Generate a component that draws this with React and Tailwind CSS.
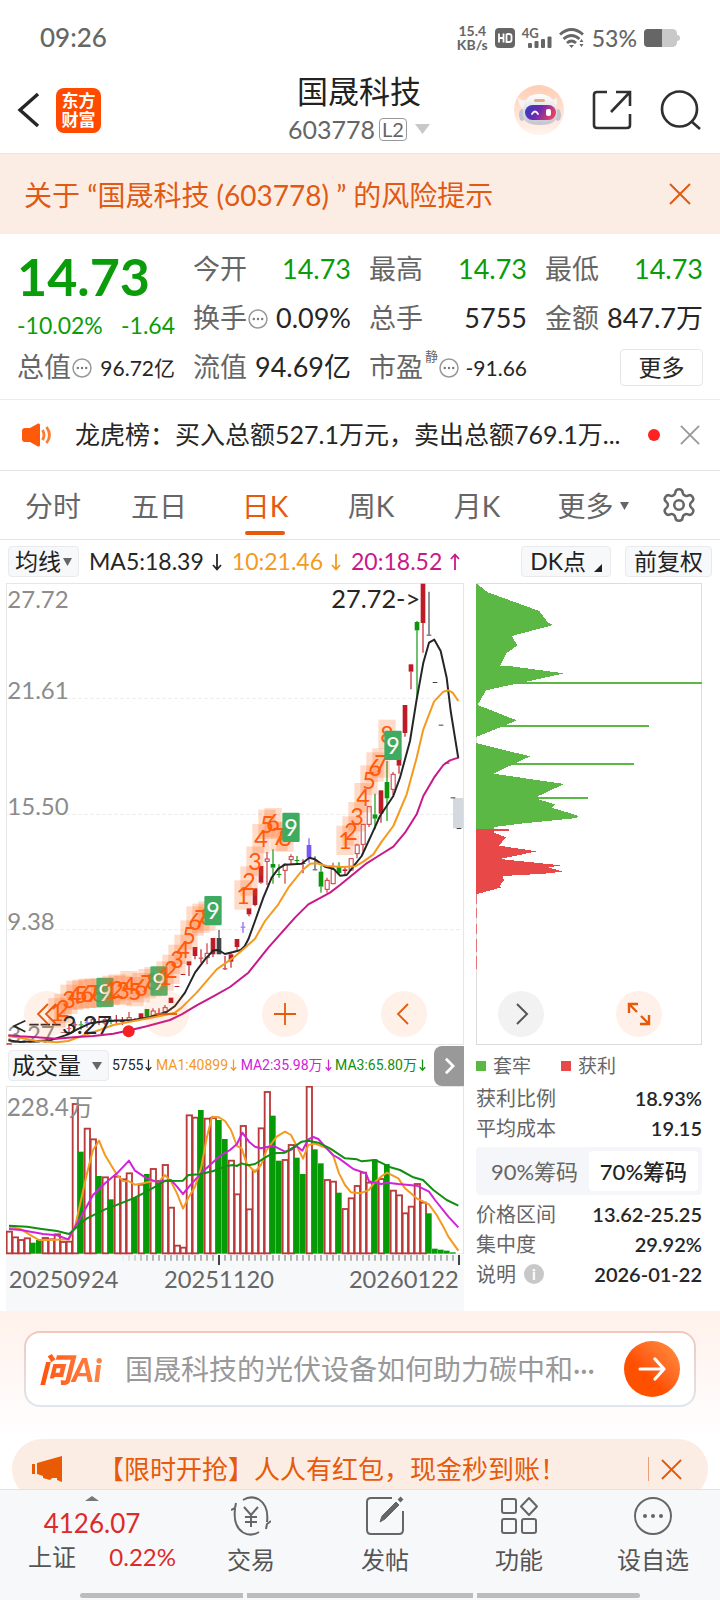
import React from "react";
import { Settings } from "lucide-react";

/* ---------- chart data (units: thirds of a pixel) ---------- */

// [top of bar, rising?] for each trading day
const VOLUME = [
  [575, 1], [592, 1], [600, 1], [595, 1], [608, 0], [600, 0], [594, 1], [598, 1], [583, 1], [606, 1],
  [605, 1], [192, 1], [335, 0], [266, 1], [298, 1], [408, 0], [412, 1], [478, 0], [410, 1], [418, 1],
  [400, 1], [472, 0], [434, 1], [402, 0], [387, 1], [420, 0], [375, 1], [503, 1], [617, 1], [623, 1],
  [226, 1], [233, 1], [210, 0], [236, 1], [234, 1], [240, 0], [297, 0], [362, 1], [463, 1], [258, 1],
  [508, 1], [392, 1], [265, 1], [156, 1], [227, 0], [362, 0], [360, 1], [315, 1], [353, 0], [402, 0],
  [140, 1], [328, 0], [370, 0], [420, 1], [425, 1], [458, 0], [507, 1], [475, 1], [438, 1], [398, 1],
  [428, 1], [358, 0], [417, 1], [372, 0], [452, 1], [466, 1], [520, 1], [500, 1], [432, 1], [488, 1],
  [520, 0], [626, 0], [629, 0], [632, 0], [637, 0],
];

// [x, body top, body bottom, high, low, kind]
// f: filled red, h: hollow red, g: green, p: purple, k: dark
const CANDLES = [
  [27, 1418, 1422, 1418, 1422, "h"], [189, 1384, 1386, 1384, 1386, "f"], [207, 1372, 1374, 1362, 1384, "f"],
  [225, 1360, 1363, 1352, 1372, "f"], [243, 1360, 1363, 1350, 1376, "g"], [261, 1354, 1357, 1338, 1370, "p"],
  [279, 1346, 1358, 1340, 1366, "h"], [297, 1350, 1353, 1340, 1362, "f"], [315, 1346, 1356, 1340, 1362, "h"],
  [333, 1350, 1353, 1342, 1360, "g"], [349, 1346, 1349, 1332, 1358, "f"], [367, 1350, 1353, 1338, 1362, "f"],
  [387, 1340, 1348, 1323, 1350, "h"], [405, 1346, 1348, 1342, 1350, "f"], [423, 1327, 1343, 1327, 1343, "f"],
  [441, 1314, 1337, 1314, 1340, "g"], [459, 1320, 1333, 1312, 1336, "h"], [477, 1328, 1331, 1312, 1333, "f"],
  [495, 1310, 1322, 1302, 1328, "h"], [513, 1280, 1296, 1280, 1296, "f"], [531, 1245, 1248, 1245, 1248, "f"],
  [549, 1209, 1212, 1209, 1212, "f"], [567, 1171, 1183, 1171, 1215, "f"], [585, 1128, 1155, 1128, 1165, "f"],
  [603, 1160, 1163, 1135, 1175, "f"], [621, 1147, 1160, 1117, 1180, "h"], [639, 1101, 1150, 1101, 1158, "f"],
  [657, 1101, 1150, 1077, 1150, "k"], [675, 1192, 1195, 1155, 1197, "f"], [693, 1150, 1172, 1145, 1190, "f"],
  [711, 1104, 1128, 1104, 1136, "f"], [729, 1067, 1070, 1053, 1085, "p"], [747, 1012, 1030, 1012, 1036, "f"],
  [765, 952, 1002, 952, 1006, "f"], [783, 885, 935, 885, 938, "f"], [801, 864, 871, 843, 942, "h"],
  [819, 879, 890, 835, 938, "g"], [837, 909, 912, 880, 920, "g"], [855, 880, 898, 876, 938, "h"],
  [873, 857, 866, 850, 880, "h"], [891, 867, 870, 855, 878, "g"], [909, 876, 879, 865, 907, "f"],
  [927, 822, 860, 802, 875, "p"], [945, 895, 898, 856, 898, "k"], [963, 902, 947, 885, 965, "g"],
  [981, 928, 955, 920, 965, "h"], [999, 895, 938, 875, 940, "h"], [1017, 885, 906, 874, 910, "g"],
  [1035, 895, 900, 888, 912, "f"], [1053, 863, 897, 863, 899, "h"], [1071, 822, 848, 818, 862, "h"],
  [1089, 760, 820, 760, 842, "h"], [1107, 707, 760, 707, 768, "h"], [1125, 730, 743, 668, 775, "g"],
  [1143, 658, 728, 658, 755, "f"], [1161, 633, 682, 570, 750, "g"], [1179, 610, 655, 603, 672, "h"],
  [1197, 560, 584, 560, 608, "f"], [1215, 402, 486, 402, 497, "f"], [1233, 280, 302, 280, 355, "f"],
  [1251, 153, 178, 150, 384, "g"], [1269, 38, 156, 38, 245, "f"], [1287, 191, 194, 62, 194, "k"],
  [1305, 333, 336, 333, 336, "k"], [1323, 461, 464, 461, 464, "k"], [1341, 575, 578, 575, 578, "k"],
  [1359, 679, 682, 679, 682, "k"], [1377, 771, 774, 771, 774, "k"],
];

// nine-count sequences: starting x and the centre height of each digit
const COUNTS = [
  [171, [1325, 1312, 1285, 1273, 1270, 1267, 1267, 1266, 1264]],
  [333, [1258, 1254, 1258, 1244, 1262, 1250, 1238, 1232, 1230]],
  [495, [1215, 1195, 1165, 1135, 1092, 1050, 1042, 1035, 1019]],
  [729, [972, 930, 870, 803, 760, 755, 796, 798, 769]],
  [1035, [808, 780, 737, 680, 627, 588, 576, 490, 523]],
];

const KLINE_MA = [
  ["#262626", "25,1408 60,1413 150,1408 205,1390 230,1376 270,1357 320,1350 400,1347 450,1338 500,1323 525,1305 555,1265 585,1205 615,1165 640,1138 655,1137 675,1149 700,1143 722,1137 734,1126 745,1105 765,1050 790,980 815,920 835,893 855,881 905,878 928,860 945,865 975,887 1000,893 1020,914 1040,912 1065,880 1085,855 1115,790 1140,735 1180,675 1200,620 1230,510 1250,385 1270,275 1287,215 1303,206 1322,240 1340,320 1352,420 1375,562"],
  ["#f39a1f", "25,1395 60,1400 110,1410 170,1414 205,1410 250,1393 290,1380 340,1362 390,1352 430,1345 480,1335 525,1325 545,1310 590,1265 650,1195 700,1160 735,1130 765,1103 795,1050 835,1000 865,950 905,900 930,878 950,877 980,885 1030,888 1065,886 1090,872 1120,850 1145,812 1180,765 1220,670 1250,560 1270,475 1302,392 1330,362 1345,358 1358,365 1375,390"],
  ["#c9188a", "25,1393 60,1396 110,1399 170,1403 230,1398 280,1395 340,1388 390,1378 440,1366 510,1347 545,1330 590,1303 640,1276 690,1248 745,1205 805,1130 885,1040 925,1000 990,965 1020,942 1100,877 1135,855 1180,827 1215,785 1250,730 1270,675 1302,620 1330,582 1350,568 1375,560"],
];

const VOLUME_MA = [
  ["#f39a1f", "27,560 63,568 99,590 117,600 150,600 207,598 225,560 243,480 261,400 279,330 297,302 315,345 333,375 351,405 369,423 387,424 405,434 430,430 459,423 477,425 495,405 513,425 531,460 549,506 567,470 585,440 603,385 621,290 636,230 657,232 675,243 693,270 711,318 725,325 740,370 765,396 783,375 800,330 830,290 855,275 873,285 891,320 909,356 925,315 945,311 981,325 999,345 1017,400 1035,435 1053,457 1080,460 1107,450 1125,425 1143,410 1161,398 1195,415 1215,445 1250,475 1287,493 1310,525 1330,560 1345,590 1375,632"],
  ["#d023d8", "27,567 63,570 100,577 130,582 171,586 205,598 225,560 243,530 279,465 315,430 351,400 370,380 387,362 405,392 440,415 470,425 513,420 531,440 549,462 567,440 603,400 657,350 690,330 711,312 727,278 747,305 765,320 783,325 819,317 855,335 873,330 890,318 907,332 925,298 940,291 955,297 975,320 999,345 1017,355 1060,387 1098,400 1107,424 1143,432 1161,428 1195,432 1251,437 1287,455 1305,480 1345,530 1375,562"],
  ["#108f10", "27,557 81,560 120,566 171,573 207,582 230,562 261,535 315,508 345,497 400,475 440,455 495,423 549,422 565,405 600,403 640,393 680,378 700,375 710,378 725,370 745,376 765,372 800,350 819,340 855,338 880,322 905,305 925,302 955,308 990,325 1035,355 1071,358 1085,364 1125,360 1143,368 1171,382 1200,390 1240,412 1269,420 1300,450 1340,480 1375,497"],
];

const COLORS = { f: "#bd1b26", h: "#c8373d", g: "#0b960b", p: "#7b57ee", k: "#444444" };

/* ---------- small drawings ---------- */

function Cross({ className }) {
  return (
    <svg viewBox="0 0 22 22" className={className} fill="none" stroke="currentColor" strokeWidth="2">
      <path d="M1 1 21 21M21 1 1 21" />
    </svg>
  );
}

function Dots() {
  return (
    <svg viewBox="0 0 20 20" className="ml-px h-5 w-5 shrink-0" fill="none" stroke="#999" strokeWidth="1.5">
      <circle cx="10" cy="10" r="9" />
      <g fill="#777" stroke="none">
        <circle cx="5.8" cy="10" r="1.2" />
        <circle cx="10" cy="10" r="1.2" />
        <circle cx="14.2" cy="10" r="1.2" />
      </g>
    </svg>
  );
}

function Caret({ className }) {
  return (
    <svg viewBox="0 0 10 10" preserveAspectRatio="none" className={className} fill="currentColor">
      <path d="M0 0H10L5 10Z" />
    </svg>
  );
}

function Robot() {
  return (
    <svg viewBox="0 0 50 50" className="h-[50px] w-[50px]">
      <defs>
        <linearGradient id="halo" x1="0" y1="0" x2="0" y2="1">
          <stop offset="0" stopColor="#ffcdb4" />
          <stop offset="1" stopColor="#fff4ee" />
        </linearGradient>
        <linearGradient id="visor" x1="0" y1="0" x2="1" y2="0.3">
          <stop offset="0" stopColor="#2b3fc0" />
          <stop offset="0.5" stopColor="#6a2bb0" />
          <stop offset="1" stopColor="#e0406a" />
        </linearGradient>
        <linearGradient id="shell" x1="0" y1="0" x2="0" y2="1">
          <stop offset="0" stopColor="#ffffff" />
          <stop offset="1" stopColor="#c4c4ce" />
        </linearGradient>
      </defs>
      <circle cx="25" cy="25" r="25" fill="url(#halo)" />
      <path d="M4 12Q4 21 10 24L17 14Q8 18 4 12Z" fill="#f6f3f4" />
      <path d="M43 12Q44 20 40 23L34 13Q41 17 43 12Z" fill="#f6f3f4" />
      <ellipse cx="8" cy="30" rx="3" ry="6" fill="#c4c6cf" />
      <ellipse cx="44" cy="30" rx="3" ry="6" fill="#c4c6cf" />
      <path d="M9 27Q9 9 25 9T43 27Q45 40 26 40T9 27Z" fill="url(#shell)" />
      <rect x="20" y="14" width="11" height="3" rx="1.5" fill="#e0b07a" />
      <rect x="11" y="20" width="31" height="15" rx="7.5" fill="url(#visor)" />
      <path d="M18 29Q21 24 24 29" fill="none" stroke="#fff" strokeWidth="1.8" strokeLinecap="round" />
      <rect x="32" y="24" width="5" height="7" rx="2" fill="#fff" />
    </svg>
  );
}

function StatusBar() {
  return (
    <div className="flex h-[75px] items-center justify-between pr-10 pl-10 text-[#666]">
      <span className="text-[26px] font-medium">09:26</span>
      <div className="flex items-center gap-[7px]">
        <span className="text-center text-[14px] leading-[14px] font-bold">15.4<br />KB/s</span>
        <svg viewBox="0 0 20 20" className="h-5 w-5">
          <rect width="20" height="20" rx="4" fill="#666" />
          <path d="M4 5.500V14.500M8.500 5.500V14.500M4 10H8.500M11.500 6V14H14Q16.500 14 16.500 12V8Q16.500 6 14 6H11.500" fill="none" stroke="#fff" strokeWidth="1.8" />
        </svg>
        <span className="relative block h-5 w-[30px]">
          <span className="absolute top-0 left-0 text-[13px] leading-[11px] font-bold">4G</span>
          <svg viewBox="0 0 24 12" className="absolute right-0 bottom-0 h-3 w-6" fill="#666">
            <rect x="0" y="7" width="4" height="5" rx="1" />
            <rect x="6.500" y="5" width="4" height="7" rx="1" />
            <rect x="13" y="3" width="4" height="9" rx="1" />
            <rect x="19.500" y="0.500" width="4" height="11.500" rx="1" />
          </svg>
        </span>
        <svg viewBox="0 0 26 20" className="h-5 w-[26px]" fill="none" stroke="#666" strokeWidth="2.800">
          <path d="M1 6.500Q12.500 -3.500 24 6.500" />
          <path d="M4.500 11Q12.500 4 20.500 11" />
          <path d="M8 15Q12.500 11 17 15" />
          <path d="M10 17H15L12.500 20Z" fill="#666" stroke="none" />
          <path d="M20.500 14 22.500 11 24.500 14ZM20.500 16 22.500 19 24.500 16Z" fill="#666" stroke="none" />
        </svg>
        <span className="text-[23px] leading-6 font-medium">53%</span>
        <svg viewBox="0 0 36 18" className="h-[18px] w-9">
          <path d="M4 0H28Q33 0 33 5V6Q36 6 36 9T33 12V13Q33 18 28 18H4Q0 18 0 14V4Q0 0 4 0Z" fill="#c9c9c9" />
          <path d="M4 0H18V18H4Q0 18 0 14V4Q0 0 4 0Z" fill="#666" />
        </svg>
      </div>
    </div>
  );
}

function Header() {
  return (
    <header className="grid h-[79px] grid-cols-[1fr_auto_1fr] items-center border-b border-[#e6e6e6] pr-[18px] pb-3 pl-4">
      <div className="flex items-center gap-4">
        <button aria-label="返回">
          <svg viewBox="0 0 24 36" className="h-9 w-6" fill="none" stroke="#262626" strokeWidth="3.400">
            <path d="M22 2 4 18 22 34" />
          </svg>
        </button>
        <a href="#home" className="flex h-[45px] w-[45px] items-center justify-center rounded-lg bg-[#ff4a00] text-center text-[17px] leading-[19px] font-bold text-white">
          东方<br />财富
        </a>
      </div>
      <div className="text-center">
        <h1 className="text-[31px] leading-8 text-[#222]">国晟科技</h1>
        <button className="flex items-center gap-1 pt-[6px] text-[25px] leading-8 text-[#666]">
          603778
          <span className="flex h-[23px] items-center rounded border border-[#999] px-[2px] text-[20px] leading-5">L2</span>
          <Caret className="ml-1 h-[10px] w-[15px] text-[#c8c8c8]" />
        </button>
      </div>
      <div className="flex items-center justify-end gap-7">
        <button aria-label="助手"><Robot /></button>
        <button aria-label="分享">
          <svg viewBox="0 0 40 40" className="h-10 w-10" fill="none" stroke="#303030" strokeWidth="2.600">
            <path d="M15 2H5Q2 2 2 5V35Q2 38 5 38H35Q38 38 38 35V24" />
            <path d="M24 2H38V16M38 2 19 22" />
          </svg>
        </button>
        <button aria-label="搜索">
          <svg viewBox="0 0 42 42" className="h-[42px] w-[42px]" fill="none" stroke="#303030" strokeWidth="2.700">
            <circle cx="19.500" cy="20" r="17.500" />
            <path d="M31 32 40 40" />
          </svg>
        </button>
      </div>
    </header>
  );
}

function Stat({ label, value, tone = "text-[#262626]", info, sup, small }) {
  return (
    <div className="flex h-[49px] items-center justify-between whitespace-nowrap">
      <span className="flex items-center text-[27px] text-[#666]">
        {label}
        {sup && <sup className="-top-3 pl-[2px] text-[13px] leading-4">{sup}</sup>}
        {info && <Dots />}
      </span>
      <span className={`${tone} ${small ? "text-[21px]" : "text-[27px]"}`}>{value}</span>
    </div>
  );
}

function Quote() {
  const green = "text-[#0a9c0a]";
  return (
    <section className="border-b border-[#ececec] px-[17px] pt-[11px] pb-[7px]">
      <div className="grid grid-cols-4 gap-x-[18px]">
        <div className="row-span-2">
          <div className={`text-[52px] leading-[62px] font-bold ${green}`}>14.73</div>
          <div className={`flex justify-between text-[23px] leading-9 ${green}`}>
            <span>-10.02%</span>
            <span>-1.64</span>
          </div>
        </div>
        <Stat label="今开" value="14.73" tone={green} />
        <Stat label="最高" value="14.73" tone={green} />
        <Stat label="最低" value="14.73" tone={green} />
        <Stat label="换手" value="0.09%" info />
        <Stat label="总手" value="5755" />
        <Stat label="金额" value="847.7万" />
        <Stat label="总值" value="96.72亿" info small />
        <Stat label="流值" value="94.69亿" />
        <Stat label="市盈" value="-91.66" sup="静" info small />
        <div className="flex items-center justify-end">
          <button className="h-[37px] w-[83px] rounded border border-[#e6e6e6] text-[23px] text-[#262626]">更多</button>
        </div>
      </div>
    </section>
  );
}

function News() {
  return (
    <section className="flex h-[71px] items-center border-b border-[#e4e4e4] pr-5 pl-[22px]">
      <svg viewBox="0 0 30 24" className="h-6 w-[30px] shrink-0">
        <path d="M3 5H8L16 0.500Q18 0 18 2V22Q18 24 16 23.500L8 19H3Q0 19 0 16V8Q0 5 3 5Z" fill="#ff5a0a" />
        <path d="M20.500 7Q23.500 12 20.500 17M24.500 4Q30.500 12 24.500 20" fill="none" stroke="#ff7a30" strokeWidth="2.800" />
      </svg>
      <a href="#news" className="min-w-0 flex-1 truncate pl-[23px] text-[25px] text-[#262626]">
        龙虎榜：买入总额527.1万元，卖出总额769.1万...
      </a>
      <span className="mr-5 h-3 w-3 shrink-0 rounded-full bg-[#f22]" />
      <button aria-label="关闭消息"><Cross className="h-5 w-5 text-[#999]" /></button>
    </section>
  );
}

function Tabs() {
  return (
    <nav className="grid h-[69px] grid-cols-[106fr_106fr_106fr_106fr_106fr_126fr_64fr] border-b border-[#e4e4e4] text-[28px] text-[#666]">
      {["分时", "五日", "日K", "周K", "月K"].map((t) => (
        <button key={t} className={t === "日K" ? "relative pt-[2px] text-[#e65a0c]" : "relative pt-[2px]"}>
          {t}
          {t === "日K" && <span className="absolute bottom-1 left-1/2 h-1 w-10 -translate-x-1/2 rounded-full bg-[#e65a0c]" />}
        </button>
      ))}
      <button className="flex items-center justify-center gap-[6px] pt-[2px]">
        更多<Caret className="h-2 w-[9px]" />
      </button>
      <button aria-label="设置" className="flex items-center justify-center pr-[18px]">
        <Settings className="h-[38px] w-[38px]" strokeWidth={1.6} />
      </button>
    </nav>
  );
}

const chip = "flex h-[31px] items-center rounded border border-[#e8eaee] bg-[#f7f8fa] text-[#222]";

function Averages() {
  return (
    <div className="flex h-[43px] items-center justify-between pr-2 pl-2 text-[23px] whitespace-nowrap">
      <div className="flex items-center gap-[10px]">
        <button className={`${chip} px-[6px]`}>
          均线<Caret className="ml-[2px] h-2 w-[9px] text-[#666]" />
        </button>
        <span className="text-[#262626]">MA5:18.39<Arrow /></span>
        <span className="text-[#f39a1f]">10:21.46<Arrow /></span>
        <span className="text-[#c9188a]">20:18.52<Arrow up /></span>
      </div>
      <div className="flex items-center gap-[14px]">
        <button className={`${chip} gap-2 px-2`}>
          DK点
          <svg viewBox="0 0 8 8" className="mt-3 h-2 w-2"><path d="M8 0V8H0Z" fill="#222" /></svg>
        </button>
        <button className={`${chip} px-2`}>前复权</button>
      </div>
    </div>
  );
}

function Arrow({ up, slim }) {
  return (
    <svg viewBox="0 0 10 18" className={slim ? "ml-[2px] inline h-4 w-[7px] align-[-3px]" : "ml-2 inline h-[18px] w-[10px] align-[-1px]"} fill="none" stroke="currentColor" strokeWidth="1.8">
      <path d={up ? "M5 17V2M1 6 5 1.500 9 6" : "M5 1V16M1 12 5 16.500 9 12"} />
    </svg>
  );
}

function Candle({ c }) {
  const [x, top, bottom, high, low, kind] = c;
  const color = COLORS[kind];
  const hollow = kind === "h";
  return (
    <g stroke={color} strokeWidth="3.500">
      {high < top && <path d={`M${x} ${high}V${top}`} />}
      {low > bottom && <path d={`M${x} ${bottom}V${low}`} />}
      {hollow ? (
        <rect x={x - 5.5} y={top} width="12" height={bottom - top} fill="#fff" strokeWidth="3" />
      ) : (
        <rect x={x - 7} y={top} width="14" height={bottom - top} fill={color} stroke="none" />
      )}
    </g>
  );
}

function KLine() {
  const round = "absolute flex h-[46px] w-[46px] -translate-x-1/2 items-center justify-center rounded-full bg-[#ff6a1a]/10 text-[#e65a0c]";
  const icon = { viewBox: "0 0 24 24", className: "h-6 w-6", fill: "none", stroke: "currentColor", strokeWidth: "1.8" };
  return (
    <div className="relative">
      <svg viewBox="18 36 1374 1386" className="block h-auto w-full" role="img" aria-label="日K线">
        <g fill="none" stroke="#ececec" strokeWidth="3">
          <rect x="19.500" y="37.500" width="1371" height="1383" stroke="#e6e6e6" />
          <path d="M18 382H1392M18 730H1392M18 1076H1392" strokeDasharray="12 6" />
        </g>
        <g fontSize="72" fill="#8c8c8c">
          <text x="22" y="112">27.72</text>
          <text x="22" y="384">21.61</text>
          <text x="22" y="732">15.50</text>
          <text x="22" y="1078">9.38</text>
          <text x="22" y="1416">3.27</text>
        </g>
        <rect x="1359" y="681" width="32" height="91" fill="#d4d8df" />
        {CANDLES.map((c) => <Candle key={c[0]} c={c} />)}
        {KLINE_MA.map(([color, points]) => (
          <polyline key={color} points={points} fill="none" stroke={color} strokeWidth="6" strokeLinejoin="round" />
        ))}
        {COUNTS.map(([x0, ys]) => (
          <g key={x0} fontSize="70" textAnchor="middle">
            {ys.slice(0, 8).map((y, i) => (
              <g key={i} fill="#ff5a0a">
                <rect x={x0 + 18 * i - 26} y={y - 44} width="52" height="88" fillOpacity="0.22" />
                <text x={x0 + 18 * i} y={y + 26}>{i + 1}</text>
              </g>
            ))}
            <rect x={x0 + 118} y={ys[8] - 44} width="52" height="88" rx="4" fill="#3fab60" fillOpacity={x0 < 400 ? 0.9 : 1} />
            <text x={x0 + 144} y={ys[8] + 26} fill="#fff">9</text>
          </g>
        ))}
        <g fontSize="76" fill="#262626">
          <text x="994" y="110">27.72-&gt;</text>
          <text x="186" y="1390">3.27</text>
          <path d="M76 1349 42 1365 76 1382M88 1361H116M122 1361H150M156 1361H182" fill="none" stroke="#262626" strokeWidth="5" />
        </g>
        <circle cx="386" cy="1381" r="18" fill="#f22222" />
      </svg>
      <button aria-label="最早" className={`${round} bottom-2 left-[9%]`}>
        <svg {...icon}><path d="M13 2 3 12 13 22M21 2 11 12 21 22" /></svg>
      </button>
      <button aria-label="缩小" className={`${round} bottom-2 left-[35%]`}>
        <svg {...icon}><path d="M1 12H23" /></svg>
      </button>
      <button aria-label="放大" className={`${round} bottom-2 left-[61%]`}>
        <svg {...icon}><path d="M1 12H23M12 1V23" /></svg>
      </button>
      <button aria-label="向前" className={`${round} bottom-2 left-[87%]`}>
        <svg {...icon}><path d="M16 2 6 12 16 22" /></svg>
      </button>
    </div>
  );
}

function VolumeHeader() {
  return (
    <div className="flex h-[41px] items-center pl-[2px] whitespace-nowrap">
      <button className={`${chip} w-[101px] shrink-0 justify-between pr-[6px] pl-[3px] text-[23px]`}>
        成交量<Caret className="h-2 w-[10px] text-[#666]" />
      </button>
      <div className="flex min-w-0 flex-1 justify-between px-[3px] font-['Roboto','Noto_Sans_CJK_SC',sans-serif] text-[14px]">
        <span className="text-[#262626]">5755<Arrow slim /></span>
        <span className="text-[#f39a1f]">MA1:40899<Arrow slim /></span>
        <span className="text-[#d023d8]">MA2:35.98万<Arrow slim /></span>
        <span className="text-[#108f10]">MA3:65.80万<Arrow slim /></span>
      </div>
      <button aria-label="更多指标" className="ml-[5px] flex h-10 w-[30px] shrink-0 items-center justify-center rounded-l-lg bg-[#999]">
        <svg viewBox="0 0 12 20" className="h-[18px] w-[11px]" fill="none" stroke="#fff" strokeWidth="3"><path d="M2 2 10 10 2 18" /></svg>
      </button>
    </div>
  );
}

function VolumeChart() {
  const ticks = Array.from({ length: 56 }, (_, i) => 369 + 18 * i);
  return (
    <svg viewBox="18 138 1374 675" className="block h-auto w-full" role="img" aria-label="成交量">
      <rect x="19.500" y="139.500" width="1371" height="502" fill="#fff" stroke="#e4e4e4" strokeWidth="3" />
      <rect x="18" y="642" width="1374" height="171" fill="#f7f8fa" />
      {VOLUME.map(([top, up], i) => {
        const x = 27 + 18 * i;
        return up ? (
          <rect key={i} x={x - 7} y={top} width="16" height={640 - top} fill="#fff" stroke="#b93a3a" strokeWidth="5.500" />
        ) : (
          <rect key={i} x={x - 9} y={top} width="17" height={641 - top} fill="#079a07" />
        );
      })}
      {VOLUME_MA.map(([color, points]) => (
        <polyline key={color} points={points} fill="none" stroke={color} strokeWidth="6" strokeLinejoin="round" />
      ))}
      <text x="20" y="227" fontSize="73" fill="#8c8c8c">228.4万</text>
      {ticks.map((x, i) => (
        <path key={x} d={`M${x} 645V662`} stroke="#a6a6a6" strokeWidth="5" opacity={Math.min(1, 0.15 + i * 0.2)} />
      ))}
      <path d="M657 645V675M1377 645V675" stroke="#444" strokeWidth="6" />
      <g fontSize="71" fill="#666">
        <text x="26" y="745">20250924</text>
        <text x="657" y="745" textAnchor="middle">20251120</text>
        <text x="1376" y="745" textAnchor="end">20260122</text>
      </g>
    </svg>
  );
}

function ChipChart() {
  const round = "absolute bottom-2 flex h-[46px] w-[46px] -translate-x-1/2 items-center justify-center rounded-full";
  return (
    <div className="relative">
      <svg viewBox="48 36 678 1386" className="block h-auto w-full" role="img" aria-label="筹码分布">
        <rect x="49.500" y="37.500" width="675" height="1383" fill="none" stroke="#dcdcdc" strokeWidth="3" />
        <g shapeRendering="crispEdges">
          <path fill="#5cb844" d="M48 37 85 65 100 70 238 120 262 153 280 162 155 195 172 223 140 246 120 286 155 286 312 307 200 332 165 339 78 358 53 402 170 448 118 470 48 498V516L210 556 100 608 312 639 235 675V685L285 700 275 710 357 735 350 741 180 758 103 768V773H48Z" />
          <path stroke="#5cb844" strokeWidth="6" d="M165 335H726M118 466H567M140 578H522M235 681H383" />
          <path fill="#e84848" d="M48 773H103V785L137 799 117 824 231 841 120 864 303 883 265 889 308 902 255 908 130 915 131 930 118 945 125 949 48 970Z" />
          <path stroke="#e84848" strokeWidth="6" d="M100 776H147" />
          <path stroke="#e84848" strokeWidth="3" opacity="0.7" d="M49.500 970V1000M49.500 1012V1040M49.500 1058V1088M49.500 1105V1142M49.500 1155V1195" />
        </g>
      </svg>
      <button aria-label="下一段" className={`${round} left-[20%] bg-[#f2f2f2] text-[#555]`}>
        <svg viewBox="0 0 24 24" className="h-6 w-6" fill="none" stroke="currentColor" strokeWidth="2"><path d="M8 2 18 12 8 22" /></svg>
      </button>
      <button aria-label="全屏" className={`${round} left-[72%] bg-[#fff1ea] text-[#e65a0c]`}>
        <svg viewBox="0 0 24 24" className="h-6 w-6" fill="none" stroke="currentColor" strokeWidth="2.400"><path d="M2 11V2H11M2 2 10 10M22 13V22H13M22 22 14 14" /></svg>
      </button>
    </div>
  );
}

function ChipRow({ label, value, info }) {
  return (
    <div className="flex h-[30px] items-center justify-between text-[20px]">
      <dt className="flex items-center gap-2 text-[#666]">
        {label}
        {info && <span className="flex h-5 w-5 items-center justify-center rounded-full bg-[#c8c8c8] text-[15px] font-bold text-white">i</span>}
      </dt>
      <dd className="font-semibold text-[#262626]">{value}</dd>
    </div>
  );
}

function ChipPanel() {
  return (
    <div>
      <ChipChart />
      <div className="flex h-[38px] items-center pt-1 text-[19px] text-[#666]">
        <span className="mr-[7px] h-[10px] w-[10px] bg-[#5cb844]" />套牢
        <span className="mr-[7px] ml-[30px] h-[10px] w-[10px] bg-[#e84848]" />获利
      </div>
      <dl>
        <ChipRow label="获利比例" value="18.93%" />
        <ChipRow label="平均成本" value="19.15" />
      </dl>
      <div className="my-1 flex h-12 rounded bg-[#f5f6f9] p-1 text-[22px] whitespace-nowrap">
        <button className="flex-1 text-[#666]">90%筹码</button>
        <button className="flex-1 rounded bg-white font-medium text-[#222]">70%筹码</button>
      </div>
      <dl>
        <ChipRow label="价格区间" value="13.62-25.25" />
        <ChipRow label="集中度" value="29.92%" />
        <ChipRow label="说明" value="2026-01-22" info />
      </dl>
    </div>
  );
}

function AskBar() {
  return (
    <section className="h-32 bg-linear-to-b from-[#fff1eb] to-white px-6 pt-5">
      <div className="rounded-2xl bg-linear-to-b from-[#f3c6bd] to-[#dfe5f0] p-[2px]">
        <form className="flex h-[72px] items-center rounded-[14px] bg-white pr-[14px] pl-[13px]">
          <label htmlFor="ask" className="w-[72px] shrink-0 bg-linear-to-r from-[#ff5205] to-[#ff8a4a] bg-clip-text text-[33px] leading-10 font-black whitespace-nowrap text-transparent italic">
            问Ai
          </label>
          <input id="ask" className="ml-[14px] min-w-0 flex-1 text-[28px] outline-none placeholder:text-[#999]" placeholder="国晟科技的光伏设备如何助力碳中和···" />
          <button type="button" aria-label="提问" className="flex h-14 w-14 shrink-0 items-center justify-center rounded-full bg-linear-to-tr from-[#ff5000] from-40% to-[#ff9040]">
            <svg viewBox="0 0 28 24" className="h-6 w-7" fill="none" stroke="#fff" strokeWidth="3.200" strokeLinecap="round" strokeLinejoin="round">
              <path d="M2 12H26M17 2 26 12 17 22" />
            </svg>
          </button>
        </form>
      </div>
    </section>
  );
}

function Promo() {
  return (
    <section className="h-[50px] overflow-hidden px-3">
      <div className="flex h-[60px] items-center rounded-full bg-[#fcede4] pr-[26px] pl-5 text-[#e65a0c]">
        <svg viewBox="0 0 30 26" className="h-[26px] w-[30px] shrink-0" fill="#e95a05">
          <path d="M0 8H3V18H0ZM5 7 30 0V26L25 24V22H20L18 24 11 22V20L5 18Z" />
        </svg>
        <a href="#promo" className="min-w-0 flex-1 truncate pl-9 text-[26px]">【限时开抢】人人有红包，现金秒到账！</a>
        <span className="mr-3 h-6 w-px bg-[#e3a27d]" />
        <button aria-label="关闭活动"><Cross className="h-[21px] w-[21px]" /></button>
      </div>
    </section>
  );
}

const NAV = [
  ["交易", <g key="a"><path d="M12 4Q20 -1 28 3.500Q38 10 36 26M28 36Q20 41 12 36.500Q2 30 4 13" /><path d="M0 14 4 12 5 7M40 25 36 28 35 33" /><path d="M13 11 20 19 27 11M20 19V31M14 21H26M14 26H26" /></g>],
  ["发帖", <g key="b"><path d="M27 2H6Q2 2 2 6V34Q2 38 6 38H34Q38 38 38 34V15" /><path d="M15 26 17 20 31 6 34 9 20 23Z" fill="#666" strokeWidth="1" /><path d="M34 5 37 2" strokeWidth="4" /></g>],
  ["功能", <g key="c"><rect x="3" y="3" width="14" height="14" rx="2" /><rect x="3" y="23" width="14" height="14" rx="2" /><rect x="23" y="23" width="14" height="14" rx="2" /><path d="M30 2 38 10.500 30 19 22 10.500Z" strokeLinejoin="round" /></g>],
  ["设自选", <g key="d"><circle cx="20" cy="20" r="18" /><g fill="#666" stroke="none"><circle cx="12" cy="20" r="2" /><circle cx="20" cy="20" r="2" /><circle cx="28" cy="20" r="2" /></g></g>],
];

function BottomNav() {
  return (
    <nav className="mt-auto h-[111px] border-t border-[#e2e2e2] bg-[#f7f8fa]">
      <div className="grid h-[103px] grid-cols-[184fr_134fr_134fr_134fr_134fr]">
        <button className="flex flex-col items-center pt-[6px]">
          <svg viewBox="0 0 14 5" className="h-[5px] w-[14px]"><path d="M0 5 7 0 14 5Z" fill="#777" /></svg>
          <span className="pt-[6px] text-[26px] leading-8 text-[#dc2b2b]">4126.07</span>
          <span className="flex w-full justify-between pr-2 pl-7 text-[24px] leading-9 text-[#555]">
            上证<span className="text-[#dc2b2b]">0.22%</span>
          </span>
        </button>
        {NAV.map(([label, drawing]) => (
          <button key={label} className="flex flex-col items-center pt-[6px] text-[24px] leading-8 text-[#555]">
            <svg viewBox="0 0 40 40" className="mb-2 h-10 w-10" fill="none" stroke="#666" strokeWidth="2">{drawing}</svg>
            {label}
          </button>
        ))}
      </div>
      <div className="flex gap-1 px-20">
        <span className="h-[5px] flex-[163] rounded-l-full bg-[#bbbcbe]" />
        <span className="h-[5px] flex-[226] bg-[#bbbcbe]" />
        <span className="h-[5px] flex-[163] rounded-r-full bg-[#bbbcbe]" />
      </div>
    </nav>
  );
}

export default function App() {
  return (
    <div className="flex min-h-screen flex-col bg-white font-['Lato','Noto_Sans_CJK_SC',sans-serif]">
      <StatusBar />
      <Header />
      <section className="flex h-20 items-center justify-between bg-[#fcede4] pr-[29px] pl-6 text-[28px] text-[#e05a14]">
        <a href="#risk" className="pt-[2px]">关于 “国晟科技 (603778) ” 的风险提示</a>
        <button aria-label="关闭提示"><Cross className="h-[22px] w-[22px]" /></button>
      </section>
      <Quote />
      <News />
      <Tabs />
      <Averages />
      <main className="grid grid-cols-[458fr_226fr] gap-3 pr-[18px] pl-[6px]">
        <div className="min-w-0">
          <KLine />
          <VolumeHeader />
          <VolumeChart />
        </div>
        <ChipPanel />
      </main>
      <AskBar />
      <Promo />
      <BottomNav />
    </div>
  );
}
